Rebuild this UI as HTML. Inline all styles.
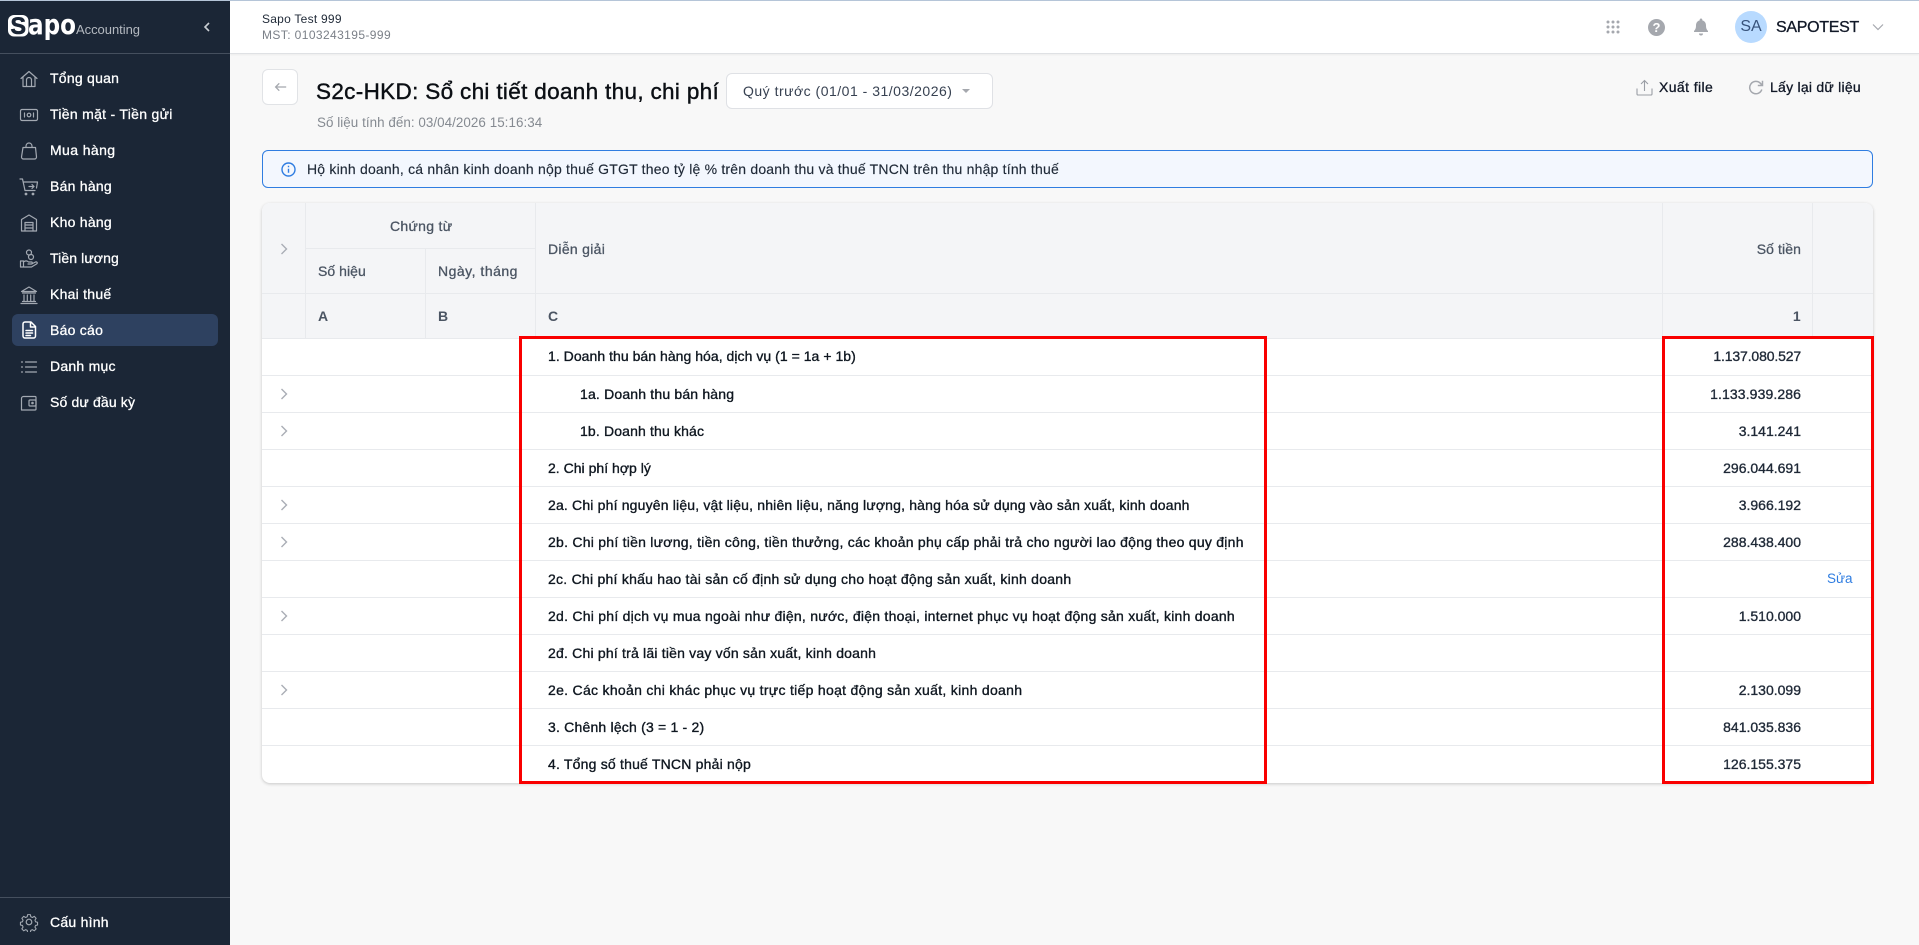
<!DOCTYPE html>
<html lang="vi"><head><meta charset="utf-8"><title>Sapo Accounting</title>
<style>
*{box-sizing:border-box}
html,body{margin:0;padding:0;width:1919px;height:945px;overflow:hidden;background:#f8f8f8;font-family:"Liberation Sans",sans-serif;color:#111827}
.a{position:absolute;white-space:nowrap}
.m{-webkit-text-stroke:.3px currentColor}
#side{position:absolute;left:0;top:0;width:230px;height:945px;background:#1b2636}
.nav{position:absolute;left:50px;font-size:14px;color:#fff;line-height:20px;-webkit-text-stroke:.3px #fff;white-space:nowrap;letter-spacing:.25px}
.ic{position:absolute;left:19px;width:20px;height:20px;fill:none;stroke:#a3a9b2;stroke-width:1.2;stroke-linecap:round;stroke-linejoin:round}
.line{position:absolute;background:#e8eaed}
.t{position:absolute;font-size:14px;line-height:20px;white-space:nowrap;color:#0f1720;-webkit-text-stroke:.35px #0f1720;letter-spacing:.25px}
.h{position:absolute;font-size:14px;line-height:20px;white-space:nowrap;color:#4b5563;-webkit-text-stroke:.3px #4b5563;letter-spacing:.3px}
.n{position:absolute;right:118px;font-size:14px;line-height:20px;color:#1f2937;-webkit-text-stroke:.35px #1f2937;white-space:nowrap}
.ch{position:absolute;left:280px;width:8px;height:12px;fill:none;stroke:#a9adb5;stroke-width:1.4}
</style></head><body>

<div class="a" style="left:230px;top:0;width:1689px;height:54px;background:#fff;border-bottom:1px solid #dfe1e4;box-shadow:0 1px 2px rgba(0,0,0,.05)"></div>
<div class="a" style="left:0;top:0;width:1919px;height:1px;background:#b5c5d8;z-index:5"></div>

<div id="side">
 <div class="a" style="left:0;top:53px;width:230px;height:1px;background:#454f5e"></div>
 <svg class="a" style="left:6px;top:10px" width="140" height="34" viewBox="0 0 140 34">
  <rect x="2" y="5" width="20.500" height="21.500" rx="6" fill="#fff"/>
  <text x="4.500" y="24" font-family="Liberation Sans" font-weight="700" font-size="24" fill="#1b2636" stroke="#1b2636" stroke-width=".6" textLength="15.500" lengthAdjust="spacingAndGlyphs">S</text>
  <text x="22" y="24" font-family="DejaVu Sans" font-weight="700" font-size="28" fill="#fff" textLength="48" lengthAdjust="spacingAndGlyphs">apo</text>
  <text x="70" y="24" font-family="Liberation Sans" font-size="13" fill="#b4b9c0" textLength="64">Accounting</text>
 </svg>
 <svg class="a" style="left:202px;top:21px" width="10" height="12" viewBox="0 0 10 12" fill="none" stroke="#c9cdd3" stroke-width="1.6"><path d="M7 2L3 6l4 4"/></svg>

 <svg class="ic" style="top:69px" viewBox="0 0 20 20"><path d="M2 9.500L10 2.500l8 7M4 8v9.500h12V8M7.500 17.500v-6.500a2.500 2.500 0 0 1 5 0v6.500"/></svg>
 <div class="nav" style="top:68px">Tổng quan</div>
 <svg class="ic" style="top:105px" viewBox="0 0 20 20"><rect x="1.500" y="4.500" width="17" height="11" rx="1.500"/><circle cx="10" cy="10" r="1.800"/><path d="M5.500 8v4M14.500 8v4"/></svg>
 <div class="nav" style="top:104px;letter-spacing:.3px">Tiền mặt - Tiền gửi</div>
 <svg class="ic" style="top:141px" viewBox="0 0 20 20"><path d="M4 6.500h12.500l1 9.500a2 2 0 0 1-2 2H4.500a2 2 0 0 1-2-2zM7 6.500V5a3 3 0 0 1 6 0v1.500"/></svg>
 <div class="nav" style="top:140px;letter-spacing:.4px">Mua hàng</div>
 <svg class="ic" style="top:177px" viewBox="0 0 20 20"><path d="M1 2h2.500l2.500 11.500h10M4.500 5h14l-1 6"/><path d="M10 9.500h5M13 7.500l2 2-2 2"/><circle cx="7" cy="17" r=".8" fill="#a3a9b2"/><circle cx="14" cy="17" r=".8" fill="#a3a9b2"/></svg>
 <div class="nav" style="top:176px">Bán hàng</div>
 <svg class="ic" style="top:213px" viewBox="0 0 20 20"><path d="M2.500 18V6.500L10 2l7.500 4.500V18z"/><path d="M6 18V9.500h8V18M6 12h8M6 15h8"/></svg>
 <div class="nav" style="top:212px">Kho hàng</div>
 <svg class="ic" style="top:249px" viewBox="0 0 20 20"><circle cx="10" cy="3.500" r="2.500"/><circle cx="12" cy="8" r="2.500"/><path d="M1.500 12h3v6h-3zM4.500 13c2-1.500 3.500-1.500 5 0h3c1 0 1 2 0 2H9M12.500 15l4-2c1.500-.5 2.500 1 1 2l-5 3H4.500"/></svg>
 <div class="nav" style="top:248px;letter-spacing:.1px">Tiền lương</div>
 <svg class="ic" style="top:285px" viewBox="0 0 20 20"><path d="M2.500 6.500L10 2l7.500 4.500zM3.500 8h13M5 10v6M8.300 10v6M11.700 10v6M15 10v6M3.500 16.500h13M2 18.500h16"/></svg>
 <div class="nav" style="top:284px">Khai thuế</div>

 <div class="a" style="left:12px;top:314px;width:206px;height:32px;background:#2e4160;border-radius:6px"></div>
 <svg class="ic" style="top:320px;stroke:#fff;stroke-width:1.500" viewBox="0 0 20 20"><path d="M4 4a2 2 0 0 1 2-2h6l4.500 4.500V16a2 2 0 0 1-2 2H6a2 2 0 0 1-2-2zM11.500 2.500V7h4.500M7 10.500h6.500M7 13h6.500M7 15.500h4.500"/></svg>
 <div class="nav" style="top:320px">Báo cáo</div>
 <svg class="ic" style="top:357px" viewBox="0 0 20 20"><path d="M6.500 5h11M6.500 10h11M6.500 15h11M2.500 5h1M2.500 10h1M2.500 15h1"/></svg>
 <div class="nav" style="top:356px">Danh mục</div>
 <svg class="ic" style="top:393px" viewBox="0 0 20 20"><path d="M16 3.500H4.500a2 2 0 0 0-2 2V17h13.500a1 1 0 0 0 1-1V4.500a1 1 0 0 0-1-1z"/><rect x="10" y="7" width="7" height="6" rx="1"/><circle cx="13.500" cy="10" r=".7"/></svg>
 <div class="nav" style="top:392px;letter-spacing:.15px">Số dư đầu kỳ</div>

 <div class="a" style="left:0;top:897px;width:230px;height:1px;background:#454f5e"></div>
 <svg class="ic" style="top:912px" viewBox="0 0 20 20"><circle cx="10" cy="10" r="2.800"/><path d="M8.500 1.800h3l.5 2.400 1.800.8 2.100-1.300 2 2.200-1.300 2 .7 1.900 2.200.5v3l-2.200.5-.7 1.800 1.300 2-2 2.200-2.100-1.300-1.800.8-.5 2.400h-3l-.5-2.400-1.800-.8-2.100 1.300-2-2.200 1.300-2-.7-1.800-2.200-.5v-3l2.200-.5.7-1.900-1.300-2 2-2.200 2.100 1.300 1.800-.8z" transform="translate(1 1) scale(.9)"/></svg>
 <div class="nav" style="top:912px">Cấu hình</div>
</div>

<div class="a" style="left:262px;top:11px;font-size:12px;line-height:16px;color:#1f2937;letter-spacing:.25px">Sapo Test 999</div>
<div class="a" style="left:262px;top:27px;font-size:12px;line-height:16px;color:#7b8088;letter-spacing:.4px">MST: 0103243195-999</div>

<svg class="a" style="left:1606px;top:20px" width="14" height="14" viewBox="0 0 14 14" fill="#a5a8ae"><circle cx="2" cy="2" r="1.500"/><circle cx="7" cy="2" r="1.500"/><circle cx="12" cy="2" r="1.500"/><circle cx="2" cy="7" r="1.500"/><circle cx="7" cy="7" r="1.500"/><circle cx="12" cy="7" r="1.500"/><circle cx="2" cy="12" r="1.500"/><circle cx="7" cy="12" r="1.500"/><circle cx="12" cy="12" r="1.500"/></svg>
<div class="a" style="left:1648px;top:19px;width:17px;height:17px;border-radius:50%;background:#a5a8ae;color:#fff;font-size:13px;font-weight:700;line-height:17px;text-align:center">?</div>
<svg class="a" style="left:1693px;top:18px" width="16" height="18" viewBox="0 0 16 18" fill="#a5a8ae"><path d="M8 0.500a1.300 1.300 0 0 1 1.300 1.300v.6c2.500.6 3.700 2.700 3.700 5.100 0 3 .8 4.200 2 5.500v1H1v-1c1.200-1.300 2-2.500 2-5.500 0-2.400 1.200-4.500 3.700-5.100v-.6A1.300 1.300 0 0 1 8 .5zM6 15.500h4a2 2 0 0 1-4 0z"/></svg>
<div class="a" style="left:1735px;top:11px;width:32px;height:32px;border-radius:50%;background:#b8daff;color:#37527a;font-size:16px;line-height:32px;text-align:center">SA</div>
<div class="a m" style="left:1776px;top:18px;font-size:16px;line-height:20px;color:#111827;letter-spacing:-.3px">SAPOTEST</div>
<svg class="a" style="left:1872px;top:23px" width="12" height="8" viewBox="0 0 12 8" fill="none" stroke="#a5a8ae" stroke-width="1.200"><path d="M1 1.500l5 5 5-5"/></svg>

<div class="a" style="left:262px;top:69px;width:36px;height:36px;background:#fff;border:1px solid #e1e3e6;border-radius:6px"></div>
<svg class="a" style="left:274px;top:82px" width="13" height="10" viewBox="0 0 16 12" fill="none" stroke="#a5a8ae" stroke-width="1.600"><path d="M15 6H2M6.500 1.500L2 6l4.500 4.500"/></svg>
<div class="a" style="left:316px;top:79px;font-size:22.500px;line-height:26px;color:#0b0f14;-webkit-text-stroke:.4px #0b0f14;letter-spacing:.33px">S2c-HKD: Sổ chi tiết doanh thu, chi phí</div>
<div class="a" style="left:726px;top:73px;width:267px;height:36px;background:#fff;border:1px solid #dfe1e5;border-radius:6px"></div>
<div class="a" style="left:743px;top:81px;font-size:14px;line-height:20px;color:#374151;letter-spacing:.5px">Quý trước (01/01 - 31/03/2026)</div>
<div class="a" style="left:962px;top:89px;width:0;height:0;border-left:4px solid transparent;border-right:4px solid transparent;border-top:4px solid #a5a8ae"></div>
<div class="a" style="left:317px;top:114px;font-size:13.400px;line-height:17px;color:#858a91;letter-spacing:.05px">Số liệu tính đến: 03/04/2026 15:16:34</div>

<svg class="a" style="left:1636px;top:79px" width="17" height="17" viewBox="0 0 17 17" fill="none" stroke="#9a9ea5" stroke-width="1.100"><path d="M1 9.500V15a1 1 0 0 0 1 1h13a1 1 0 0 0 1-1V9.500M8.500 12V2M5 5l3.500-3.500L12 5"/></svg>
<div class="a m" style="left:1659px;top:77px;font-size:14px;line-height:20px;color:#111827;letter-spacing:.4px">Xuất file</div>
<svg class="a" style="left:1748px;top:80px" width="16" height="15" viewBox="0 0 16 15" fill="none" stroke="#a5a8ae" stroke-width="1.500"><path d="M13.800 9.500a6.200 6.200 0 1 1-1.500-6.300L14 5M14.500 .8V5.500H9.800"/></svg>
<div class="a m" style="left:1770px;top:77px;font-size:14px;line-height:20px;color:#111827;letter-spacing:.25px">Lấy lại dữ liệu</div>

<div class="a" style="left:262px;top:150px;width:1611px;height:38px;background:#f3f7fe;border:1px solid #2f7de1;border-radius:6px"></div>
<svg class="a" style="left:281px;top:162px" width="15" height="15" viewBox="0 0 15 15" fill="none" stroke="#2f7de1" stroke-width="1.400"><circle cx="7.500" cy="7.500" r="6.500"/><path d="M7.500 6.800v4M7.500 3.800v1.400"/></svg>
<div class="a" style="left:307px;top:159px;font-size:14px;line-height:20px;color:#1f2937;-webkit-text-stroke:.15px #1f2937;letter-spacing:.2px">Hộ kinh doanh, cá nhân kinh doanh nộp thuế GTGT theo tỷ lệ % trên doanh thu và thuế TNCN trên thu nhập tính thuế</div>

<!-- table -->
<div class="a" style="left:262px;top:203px;width:1611px;height:580px;background:#fff;border-radius:8px;box-shadow:0 1px 3px rgba(0,0,0,.2);overflow:hidden">
 <div class="a" style="left:0;top:0;width:1611px;height:135px;background:#f4f5f7"></div>
</div>
<div class="line" style="left:305px;top:203px;width:1px;height:135px"></div>
<div class="line" style="left:425px;top:248px;width:1px;height:90px"></div>
<div class="line" style="left:535px;top:203px;width:1px;height:135px"></div>
<div class="line" style="left:1662px;top:203px;width:1px;height:135px"></div>
<div class="line" style="left:1812px;top:203px;width:1px;height:135px"></div>
<div class="line" style="left:305px;top:248px;width:231px;height:1px"></div>
<div class="line" style="left:262px;top:293px;width:1611px;height:1px"></div>
<div class="line" style="left:262px;top:338px;width:1611px;height:1px"></div>
<div class="line" style="left:262px;top:375px;width:1611px;height:1px"></div>
<div class="line" style="left:262px;top:412px;width:1611px;height:1px"></div>
<div class="line" style="left:262px;top:449px;width:1611px;height:1px"></div>
<div class="line" style="left:262px;top:486px;width:1611px;height:1px"></div>
<div class="line" style="left:262px;top:523px;width:1611px;height:1px"></div>
<div class="line" style="left:262px;top:560px;width:1611px;height:1px"></div>
<div class="line" style="left:262px;top:597px;width:1611px;height:1px"></div>
<div class="line" style="left:262px;top:634px;width:1611px;height:1px"></div>
<div class="line" style="left:262px;top:671px;width:1611px;height:1px"></div>
<div class="line" style="left:262px;top:708px;width:1611px;height:1px"></div>
<div class="line" style="left:262px;top:745px;width:1611px;height:1px"></div>

<div class="h" style="left:390px;top:216px">Chứng từ</div>
<div class="h" style="left:318px;top:261px;letter-spacing:.05px">Số hiệu</div>
<div class="h" style="left:438px;top:261px;letter-spacing:.5px">Ngày, tháng</div>
<div class="h" style="left:548px;top:239px">Diễn giải</div>
<div class="h" style="right:118px;top:239px;letter-spacing:.1px">Số tiền</div>
<div class="h" style="left:318px;top:306px;font-weight:700;-webkit-text-stroke:0">A</div>
<div class="h" style="left:438px;top:306px;font-weight:700;-webkit-text-stroke:0">B</div>
<div class="h" style="left:548px;top:306px;font-weight:700;-webkit-text-stroke:0">C</div>
<div class="h" style="right:118px;top:306px;font-weight:700;-webkit-text-stroke:0">1</div>

<svg class="ch" style="top:243px" viewBox="0 0 8 12"><path d="M1.500 1l5 5-5 5"/></svg>
<svg class="ch" style="top:388px" viewBox="0 0 8 12"><path d="M1.500 1l5 5-5 5"/></svg>
<svg class="ch" style="top:425px" viewBox="0 0 8 12"><path d="M1.500 1l5 5-5 5"/></svg>
<svg class="ch" style="top:499px" viewBox="0 0 8 12"><path d="M1.500 1l5 5-5 5"/></svg>
<svg class="ch" style="top:536px" viewBox="0 0 8 12"><path d="M1.500 1l5 5-5 5"/></svg>
<svg class="ch" style="top:610px" viewBox="0 0 8 12"><path d="M1.500 1l5 5-5 5"/></svg>
<svg class="ch" style="top:684px" viewBox="0 0 8 12"><path d="M1.500 1l5 5-5 5"/></svg>

<div class="t" style="left:548px;top:346px;letter-spacing:.04px">1. Doanh thu bán hàng hóa, dịch vụ (1 = 1a + 1b)</div>
<div class="t" style="left:580px;top:384px;letter-spacing:.18px">1a. Doanh thu bán hàng</div>
<div class="t" style="left:580px;top:421px;letter-spacing:.15px">1b. Doanh thu khác</div>
<div class="t" style="left:548px;top:458px;letter-spacing:.02px">2. Chi phí hợp lý</div>
<div class="t" style="left:548px;top:495px;letter-spacing:.175px">2a. Chi phí nguyên liệu, vật liệu, nhiên liệu, năng lượng, hàng hóa sử dụng vào sản xuất, kinh doanh</div>
<div class="t" style="left:548px;top:532px">2b. Chi phí tiền lương, tiền công, tiền thưởng, các khoản phụ cấp phải trả cho người lao động theo quy định</div>
<div class="t" style="left:548px;top:569px">2c. Chi phí khấu hao tài sản cố định sử dụng cho hoạt động sản xuất, kinh doanh</div>
<div class="t" style="left:548px;top:606px">2d. Chi phí dịch vụ mua ngoài như điện, nước, điện thoại, internet phục vụ hoạt động sản xuất, kinh doanh</div>
<div class="t" style="left:548px;top:643px;letter-spacing:.2px">2đ. Chi phí trả lãi tiền vay vốn sản xuất, kinh doanh</div>
<div class="t" style="left:548px;top:680px;letter-spacing:.3px">2e. Các khoản chi khác phục vụ trực tiếp hoạt động sản xuất, kinh doanh</div>
<div class="t" style="left:548px;top:717px;letter-spacing:.2px">3. Chênh lệch (3 = 1 - 2)</div>
<div class="t" style="left:548px;top:754px;letter-spacing:.2px">4. Tổng số thuế TNCN phải nộp</div>

<div class="n" style="top:346px;letter-spacing:-.15px">1.137.080.527</div>
<div class="n" style="top:384px;letter-spacing:.1px">1.133.939.286</div>
<div class="n" style="top:421px">3.141.241</div>
<div class="n" style="top:458px">296.044.691</div>
<div class="n" style="top:495px">3.966.192</div>
<div class="n" style="top:532px">288.438.400</div>
<div class="a" style="left:1827px;top:569px;font-size:13.500px;line-height:20px;color:#2f7de1">Sửa</div>
<div class="n" style="top:606px">1.510.000</div>
<div class="n" style="top:680px">2.130.099</div>
<div class="n" style="top:717px">841.035.836</div>
<div class="n" style="top:754px">126.155.375</div>

<div class="a" style="left:519px;top:336px;width:748px;height:448px;border:3px solid #f90000;z-index:3"></div>
<div class="a" style="left:1662px;top:336px;width:212px;height:448px;border:3px solid #f90000;z-index:3"></div>
</body></html>
